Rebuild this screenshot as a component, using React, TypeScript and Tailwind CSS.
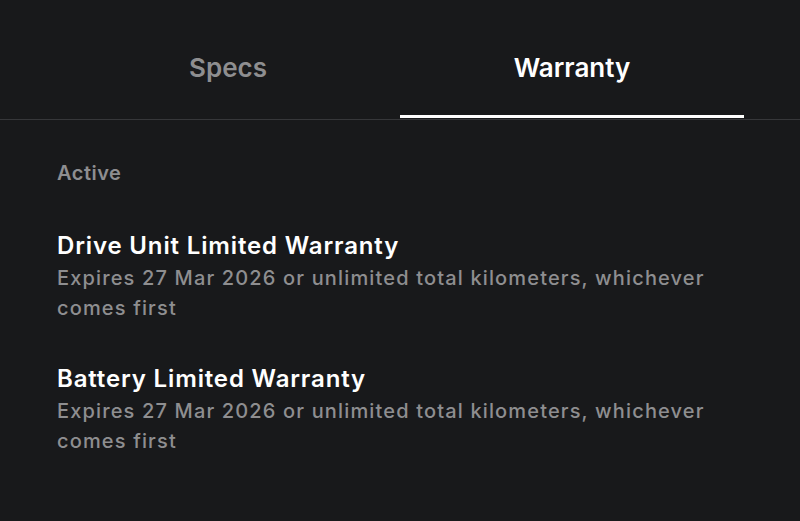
const warranties = [
    {
        title: 'Drive Unit Limited Warranty',
        detail: 'Expires 27 Mar 2026 or unlimited total kilometers, whichever comes first',
    },
    {
        title: 'Battery Limited Warranty',
        detail: 'Expires 27 Mar 2026 or unlimited total kilometers, whichever comes first',
    },
];

export default function App() {
    return (
        <div
            className="min-h-[521px] w-full bg-[#18191b] text-white"
            style={{ fontFamily: 'Inter, "Noto Sans", sans-serif' }}
        >
            <div className="border-b border-[#36373a]">
                <div className="flex px-[56px]">
                    <button className="flex h-[119px] flex-1 items-center justify-center pt-[15px] text-[26px] font-semibold text-[#8e8e90]">
                        Specs
                    </button>
                    <button className="relative flex h-[119px] flex-1 items-center justify-center pt-[15px] text-[26px] font-semibold text-white">
                        Warranty
                        <span className="absolute right-0 bottom-[1px] left-0 h-[3px] bg-white" />
                    </button>
                </div>
            </div>

            <div className="px-[57px] pt-[39px]">
                <p className="text-[20px] leading-[28px] font-semibold tracking-[0.5px] text-[#8e8e90]">
                    Active
                </p>
                <div className="mt-[44px] flex flex-col gap-[41px]">
                    {warranties.map((w) => (
                        <div key={w.title} className="max-w-[680px]">
                            <h3 className="text-[24px] leading-[30px] font-semibold tracking-[0.85px] text-white">
                                {w.title}
                            </h3>
                            <p className="mt-[2px] text-[20px] leading-[30px] font-medium tracking-[1.15px] text-[#8e8e90]">
                                {w.detail}
                            </p>
                        </div>
                    ))}
                </div>
            </div>
        </div>
    );
}
